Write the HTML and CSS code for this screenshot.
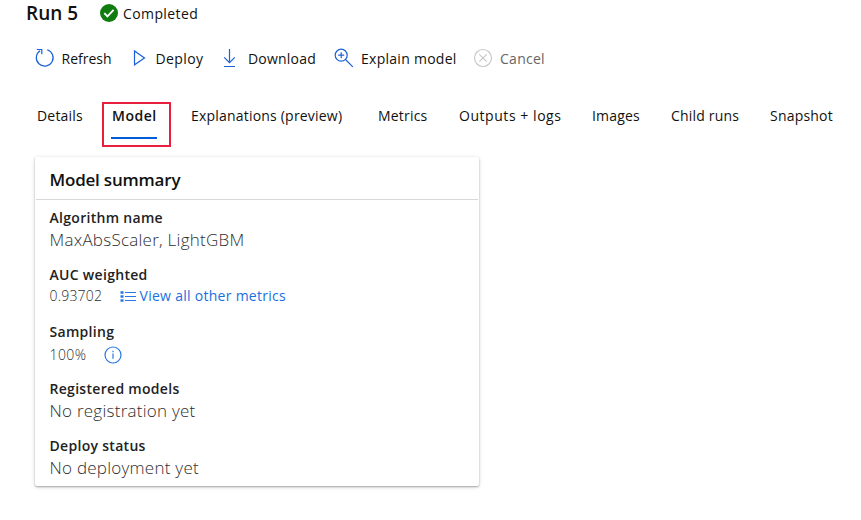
FILE: index.html
```
<!DOCTYPE html>
<html lang="en">
<head>
<meta charset="utf-8">
<title>Run 5</title>
<link rel="stylesheet" href="styles.css">
</head>
<body>
<header class="run-header">
  <h1>Run 5</h1>
  <svg class="status-icon" width="18" height="18" viewBox="0 0 18 18"><circle cx="9" cy="9" r="9" fill="#107c10"/><path d="M4.3 9.2l3.1 3.1 6.2-6.4" fill="none" stroke="#fff" stroke-width="1.9"/></svg>
  <span class="status">Completed</span>
</header>
<nav class="toolbar">
  <svg width="20" height="20" viewBox="0 0 20 20"><path d="M12.2 1.7A8.4 8.4 0 1 1 5.1 2.7M1.8 1.5h5v4.7" /></svg>
  <span class="refresh">Refresh</span>
  <svg width="20" height="20" viewBox="0 0 20 20"><path d="M1.5 3v13.8L11.5 10z"/></svg>
  <span class="deploy">Deploy</span>
  <svg width="20" height="20" viewBox="0 0 20 20"><path d="M6.5 1v13.5M1.2 9.3l5.3 5.3 5.3-5.3M1 18.5h11"/></svg>
  <span class="download">Download</span>
  <svg width="20" height="20" viewBox="0 0 20 20"><circle cx="7.2" cy="7.2" r="6"/><path d="M11.5 11.5l7.3 7.3M7.2 4.2v6M4.2 7.2h6"/></svg>
  <span class="explain">Explain model</span>
  <svg class="muted" width="20" height="20" viewBox="0 0 20 20"><circle cx="10" cy="10" r="8.5"/><path d="M6.3 6.3l7.4 7.4M13.7 6.3l-7.4 7.4"/></svg>
  <span class="cancel">Cancel</span>
</nav>
<nav class="tabs">
  <span>Details</span>
  <span class="selected"><b>Model</b></span>
  <span class="explanations">Explanations (preview)</span>
  <span>Metrics</span>
  <span class="outputs">Outputs + logs</span>
  <span>Images</span>
  <span>Child runs</span>
  <span>Snapshot</span>
</nav>
<section class="card">
  <h2>Model summary</h2>
  <dl>
    <dt>Algorithm name</dt>
    <dd class="large">MaxAbsScaler, LightGBM</dd>
    <dt>AUC weighted</dt>
    <dd class="metric"><span class="score">0.93702</span>
      <a class="link"><svg width="16" height="14" viewBox="0 0 16 14"><path d="M5 3.5h11M5 7.5h11M5 11.5h11"/><path d="M.5 3.5h3M.5 7.5h3M.5 11.5h3" stroke-width="2.4"/></svg><span>View all other metrics</span></a></dd>
    <dt>Sampling</dt>
    <dd><span class="percent">100%</span>
      <svg class="info" width="18" height="18" viewBox="0 0 18 18"><circle cx="9" cy="9" r="8"/><path d="M9 7.5v5.3M9 4.8v1.5"/></svg></dd>
    <dt>Registered models</dt>
    <dd class="large">No registration yet</dd>
    <dt>Deploy status</dt>
    <dd class="large">No deployment yet</dd>
  </dl>
</section>
</body>
</html>
```
FILE: styles.css
```
* { box-sizing: border-box; }
body {
  margin: 0;
  min-height: 520px;
  background: #fff;
  color: #111;
  font: 400 14px/20px "Open Sans", "Noto Sans", sans-serif;
  letter-spacing: .2px;
  white-space: nowrap;
}
h1, h2, dl, dd { margin: 0; }
svg { display: block; fill: none; stroke: #1b62d6; stroke-width: 1.2; }
.run-header { display: grid; grid-template-columns: 74px 23px auto; height: 26px; padding-left: 26px; align-items: center; }
h1 { font-size: 19px; font-weight: 600; line-height: 26px; letter-spacing: 0; }
.status-icon { stroke: none; }
.status { padding-top: 2px; letter-spacing: .4px; }
.toolbar {
  display: grid;
  grid-template-columns: 27px 71.5px 22.5px 67.5px 25px 86px 27px 112px 27px auto;
  align-items: center;
  height: 24px;
  margin-top: 21px;
  padding-left: 34.5px;
}
.toolbar svg { margin-top: -3px; }
.toolbar .muted { stroke: #c8c8c8; }
.toolbar .refresh { letter-spacing: 0; }
.explain, .cancel { letter-spacing: .27px; }
.deploy { letter-spacing: .4px; }
.cancel { color: #666; }
.tabs {
  display: grid;
  grid-template-columns: 65px 89px 187px 81px 133px 79px 99px auto;
  height: 46px;
  margin-top: 31px;
  padding-left: 37px;
}
.tabs span { padding-top: 4px; }
.tabs .outputs { letter-spacing: .55px; }
.tabs .selected { width: 69px; height: 45px; border: 2px solid #e81f3e; padding: 2px 7px; }
.selected b { display: block; width: 46px; height: 33px; padding-left: 1px; border-bottom: 2px solid #015cda; font-weight: 600; letter-spacing: .5px; }
.card {
  width: 444px;
  height: 329px;
  margin: 9px 0 0 35px;
  border-radius: 2px;
  box-shadow: 0 1px 2px rgba(0,0,0,.3), 0 1px 5px rgba(0,0,0,.12);
}
h2 { height: 43px; margin: 0 1px; padding: 10px 13.5px 0; border-bottom: 1px solid #d8d8d8; font-size: 17px; font-weight: 600; line-height: 26px; letter-spacing: -.2px; }
dl { padding: 8px 14.5px; }
dt { height: 20px; font-weight: 600; color: #222; letter-spacing: .3px; }
dd { display: flex; align-items: center; height: 25px; margin-bottom: 12px; color: #2e2e2e; }
.large { padding-bottom: 2px; font-size: 17px; font-weight: 300; letter-spacing: .25px; }
.metric { padding-bottom: 3px; }
.score, .percent { font-weight: 300; }
.score { width: 70px; }
.percent { width: 54px; letter-spacing: .4px; }
.link { display: flex; align-items: center; gap: 4px; color: #1a6fe0; letter-spacing: .28px; }
.link svg, .info { stroke: #2876e5; }
```
